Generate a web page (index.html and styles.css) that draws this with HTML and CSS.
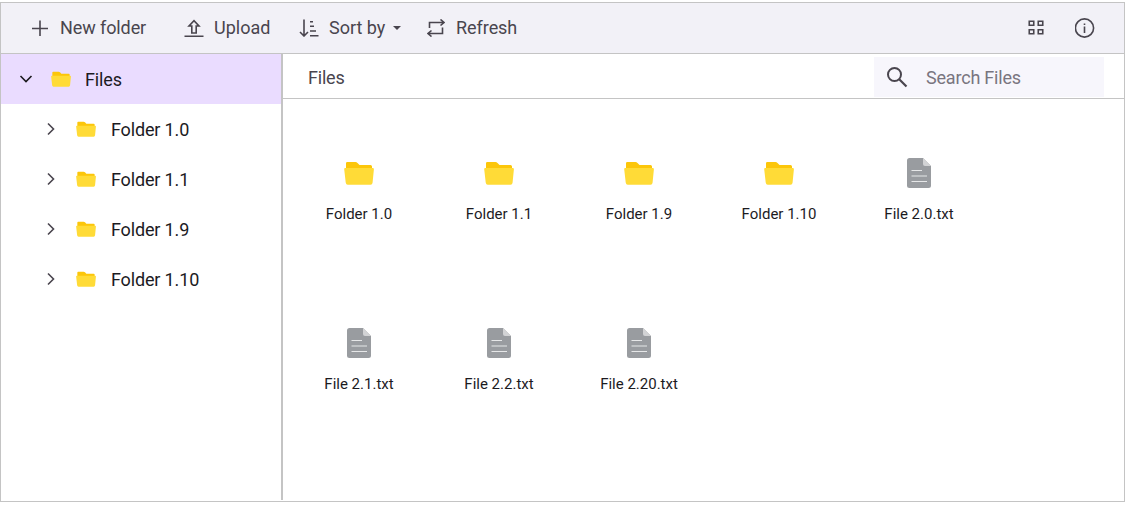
FILE: index.html
```
<!DOCTYPE html>
<html lang="en">
<head>
<meta charset="utf-8">
<title>File manager</title>
<link rel="stylesheet" href="styles.css">
</head>
<body>
<svg class="defs" width="0" height="0">
  <symbol id="folder" viewBox="0 0 30 24">
    <path d="M2 10V2.200Q2 1 3.300 1H11.500Q12.500 1 13.500 2L15.500 4H26.500Q28 4 28 5.500V10Z" fill="#fcc60a"/>
    <path d="M1.300 7H28.700Q30 7 29.900 8.300L28.600 21.500Q28.400 23.700 26.500 23.700H3.800Q2 23.700 1.700 21.500L.2 8.300Q0 7 1.300 7Z" fill="#ffdb37"/>
  </symbol>
  <symbol id="file" viewBox="0 0 24 30">
    <path d="M2.500 0H16L24 8V27.500Q24 30 21.500 30H2.500Q0 30 0 27.500V2.500Q0 0 2.500 0Z" fill="#999ca0"/>
    <path d="M16 0L24 8H18Q16 8 16 6Z" fill="#d2d3d5"/>
    <path d="M4.500 12.500H15M4.500 18H20M4.500 23.500H20" stroke="#e6e7e8" stroke-width="1.200"/>
  </symbol>
  <symbol id="chevron" viewBox="0 0 14 14">
    <path d="M4 1.500L9.500 7L4 12.500" fill="none" stroke="currentColor" stroke-width="1.600"/>
  </symbol>
</svg>
<div class="manager">
  <header class="toolbar">
    <button class="tool new"><svg width="18" height="18" viewBox="0 0 18 18"><path d="M10 1.500V17M2 9.500H18" class="line"/></svg>New folder</button>
    <button class="tool upload"><svg width="20" height="18" viewBox="0 0 20 18"><path d="M.5 17.300H19.500M7.800 14V7H5L10 1.600L15 7H12.200V14Z" class="line"/></svg>Upload</button>
    <button class="tool sort"><svg width="20" height="18" viewBox="0 0 20 18"><path d="M5 .5V17M1 13L5 17L9 13M11 2.700H14M11 7.300H15M11 12H17M11 16.700H19.500" class="line"/></svg>Sort by<svg class="caret" width="8" height="4" viewBox="0 0 8 4"><path d="M0 0H8L4 4Z" fill="currentColor"/></svg></button>
    <button class="tool refresh"><svg width="18" height="18" viewBox="0 0 18 18"><path d="M2.500 9V3.500H17M13.500 .5L17 3.500L13.500 6.500M15.500 8.500V14.500H1M4.500 11.500L1 14.500L4.500 17.500" class="line"/></svg>Refresh</button>
    <span class="spacer"></span>
    <button class="tool grid-view" aria-label="View"><svg width="16" height="16" viewBox="0 0 16 16"><path d="M1.250 1.250H5.750V5.250H1.250ZM10.250 1.250H14.750V5.250H10.250ZM1.250 9.750H5.750V13.750H1.250ZM10.250 9.750H14.750V13.750H10.250Z" class="line"/></svg></button>
    <button class="tool" aria-label="Details"><svg width="20" height="20" viewBox="0 0 20 20"><circle cx="9.500" cy="10" r="9.100" class="line"/><path d="M9.500 8.500V15M9.500 5.500V7" class="line"/></svg></button>
  </header>
  <div class="body">
    <nav class="tree">
      <div class="node root"><svg class="chev open"><use href="#chevron"/></svg><svg class="tree-icon"><use href="#folder"/></svg><span class="label">Files</span></div>
      <div class="node"><svg class="chev"><use href="#chevron"/></svg><svg class="tree-icon"><use href="#folder"/></svg><span class="label">Folder 1.0</span></div>
      <div class="node"><svg class="chev"><use href="#chevron"/></svg><svg class="tree-icon"><use href="#folder"/></svg><span class="label">Folder 1.1</span></div>
      <div class="node"><svg class="chev"><use href="#chevron"/></svg><svg class="tree-icon"><use href="#folder"/></svg><span class="label">Folder 1.9</span></div>
      <div class="node"><svg class="chev"><use href="#chevron"/></svg><svg class="tree-icon"><use href="#folder"/></svg><span class="label">Folder 1.10</span></div>
    </nav>
    <main class="content">
      <div class="path"><span class="label">Files</span>
        <div class="search"><svg width="22" height="22" viewBox="0 0 22 22"><circle cx="8.500" cy="8.500" r="6.500" fill="none" stroke="currentColor" stroke-width="2"/><path d="M13 13L20.500 20.500" stroke="currentColor" stroke-width="2.200"/></svg><span class="label">Search Files</span></div>
      </div>
      <div class="items">
        <div class="item"><svg class="big"><use href="#folder"/></svg>Folder 1.0</div>
        <div class="item"><svg class="big"><use href="#folder"/></svg>Folder 1.1</div>
        <div class="item"><svg class="big"><use href="#folder"/></svg>Folder 1.9</div>
        <div class="item"><svg class="big"><use href="#folder"/></svg>Folder 1.10</div>
        <div class="item"><svg class="big"><use href="#file"/></svg>File 2.0.txt</div>
        <div class="item"><svg class="big"><use href="#file"/></svg>File 2.1.txt</div>
        <div class="item"><svg class="big"><use href="#file"/></svg>File 2.2.txt</div>
        <div class="item"><svg class="big"><use href="#file"/></svg>File 2.20.txt</div>
      </div>
    </main>
  </div>
</div>
</body>
</html>
```
FILE: styles.css
```
* { box-sizing: border-box; }
body { margin: 0; padding-top: 2px; background: #fff; font: 18px/24px Roboto, sans-serif; color: #1c1b1f; }
svg { display: block; flex: none; }
.defs { position: absolute; }
.line { fill: none; stroke: currentColor; stroke-width: 1.6; }
.manager { width: 1125px; height: 500px; border: 1px solid #c4c4c4; display: flex; flex-direction: column; }
.toolbar { height: 51px; flex: none; display: flex; align-items: center; padding: 0 29px; background: #f2f1f7; border-bottom: 1px solid #c4c4c4; color: #49454e; }
.tool { display: flex; align-items: center; padding: 0; border: 0; background: none; font: inherit; color: inherit; white-space: nowrap; }
.new { width: 154px; gap: 12px; letter-spacing: -0.1px; }
.upload { width: 115px; gap: 10px; }
.sort { width: 128px; gap: 10px; }
.refresh { gap: 11px; letter-spacing: -0.05px; }
.caret { margin-left: -2px; }
.spacer { flex: 1; }
.grid-view { margin-right: 31px; }
.body { flex: 1; display: flex; min-height: 0; }
.tree { width: 282px; margin-bottom: 1px; border-right: 2px solid #c4c4c4; letter-spacing: -0.15px; }
.node { height: 50px; display: flex; align-items: center; padding-left: 43px; }
.root { padding-left: 18px; background: #eadcff; }
.label { padding-top: 2px; }
.chev { width: 14px; height: 14px; margin-right: 18px; color: #49454e; }
.open { transform: rotate(90deg); color: #1c1b1f; }
.tree-icon { width: 20px; height: 16px; margin-right: 15px; }
.root .tree-icon { margin-right: 14px; }
.content { flex: 1; }
.path { height: 45px; display: flex; align-items: center; justify-content: space-between; padding: 3px 20px 1px 25px; border-bottom: 1px solid #c4c4c4; color: #49454e; letter-spacing: -0.2px; }
.search { width: 230px; height: 40px; display: flex; align-items: center; gap: 18px; padding-left: 12px; background: #f7f6fc; color: #79757f; }
.search svg { color: #49454e; }
.items { display: grid; grid-template-columns: repeat(5, 140px); grid-auto-rows: 170px; padding: 59px 0 0 6px; }
.item { display: flex; flex-direction: column; align-items: center; gap: 16px; font-size: 15px; line-height: 20px; }
.big { width: 30px; height: 30px; }
```
